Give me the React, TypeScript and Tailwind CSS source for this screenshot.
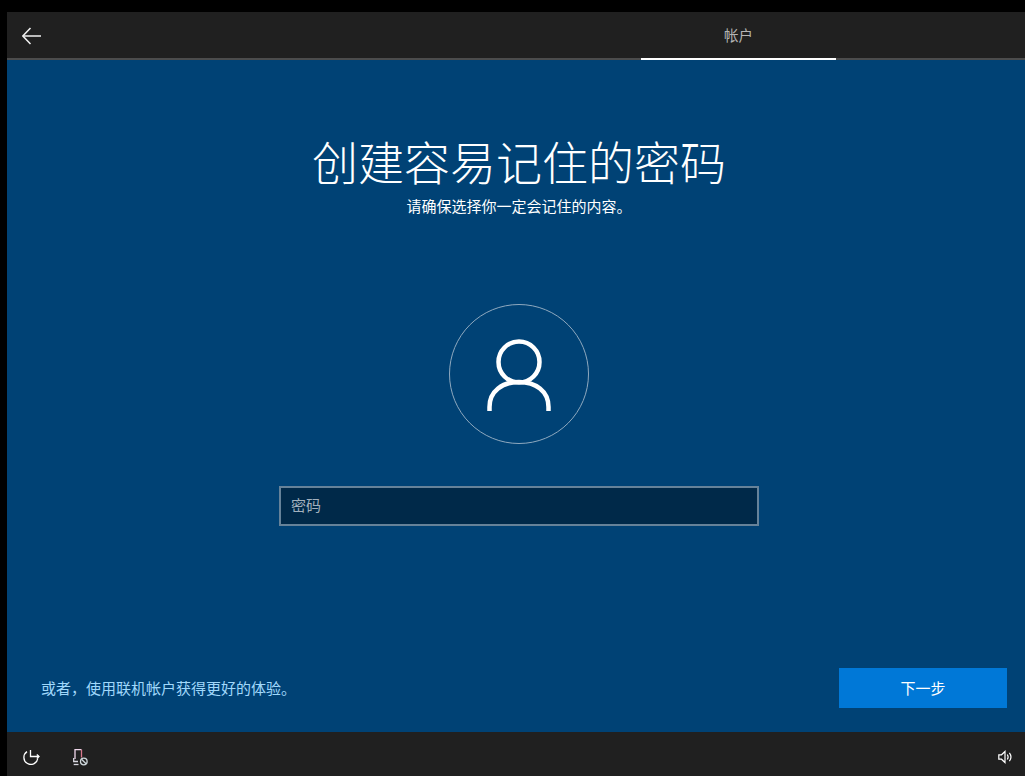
const cjk = "font-['Noto_Sans_CJK_SC','Noto_Sans',sans-serif]";

function BackIcon() {
  return (
    <svg width="19" height="18" viewBox="0 0 19 18" fill="none" stroke="#f0f0f0" strokeWidth="1.5">
      <path d="M8.5 1L0.9 9L8.5 17" />
      <path d="M1 9H19" />
    </svg>
  );
}

function EaseIcon() {
  return (
    <svg width="17" height="15" viewBox="0 0 17 15" fill="none" stroke="white" strokeWidth="1.3">
      <path d="M4 1.6A7 7 0 1 0 14.8 8.5" />
      <path d="M7.5 0V6.5H16" />
      <path d="M13.8 4.5L16 6.5L13.8 8.5" />
    </svg>
  );
}

function MicOffIcon() {
  return (
    <svg width="15" height="17" viewBox="0 0 15 17" fill="none" strokeWidth="1.3">
      <path d="M2 10V0.7H8.5" stroke="#f0d8ec" />
      <path d="M8.5 0.7V8.5" stroke="#d8788c" />
      <path d="M0.7 9V12.5H5" stroke="#d8d8e0" />
      <path d="M0.7 15.5H5.5" stroke="#d8d8e0" />
      <circle cx="10.8" cy="12.5" r="3.3" stroke="#cfd8dc" />
      <path d="M8.5 10.2L13.1 14.8" stroke="#cfd8dc" />
    </svg>
  );
}

function VolumeIcon() {
  return (
    <svg width="15" height="14" viewBox="0 0 15 14" fill="none" stroke="white" strokeWidth="1.2">
      <path d="M0.8 4.8H3.5L7 1.5V12.5L3.5 9.2H0.8Z" />
      <path d="M9.3 4.5C10.3 6 10.3 8 9.3 9.5" />
      <path d="M11.4 2.8C13.2 5.2 13.2 8.8 11.4 11.2" />
    </svg>
  );
}

function UserIcon() {
  return (
    <svg width="64" height="72" viewBox="0 0 64 72" fill="none" stroke="white" strokeWidth="4.5">
      <circle cx="32" cy="23" r="20.5" />
      <path d="M2.5 72V68C2.5 52 15.5 43 32 43C48.5 43 61.5 52 61.5 68V72" />
    </svg>
  );
}

export default function App() {
  return (
    <div className={`${cjk} flex h-[776px] w-[1025px] flex-col overflow-hidden bg-black pt-3 pl-[7px] text-white`}>
      {/* Top bar */}
      <header className="flex h-12 shrink-0 border-b-2 border-[#4c4c4c] bg-[#202020]">
        <div className="flex w-[634px] items-center pt-[2px] pl-[15px]">
          <BackIcon />
        </div>
        <div className="-mb-[2px] flex w-[195px] items-center justify-center border-b-2 border-white pb-[1px] text-[14.5px] text-[#b4b4b4]">
          帐户
        </div>
      </header>

      {/* Main */}
      <main className="flex flex-1 flex-col items-center bg-[#004275]">
        <div className="flex flex-col items-center pl-[6px]">
          <h1 className="mt-[69px] text-[46px] leading-[62px] font-light">创建容易记住的密码</h1>
          <p className="mt-[5px] text-[15px] leading-5">请确保选择你一定会记住的内容。</p>

          <div className="mt-[88px] flex h-[140px] w-[140px] items-center justify-center rounded-full border border-[#8fa9bf] pt-[1px]">
            <UserIcon />
          </div>

          <div className="mt-[42px] flex h-10 w-[480px] items-center border-2 border-[#668299] bg-[#002949] px-[10px] pb-[2px] text-[15px] text-[#a2b0bd]">
            密码
          </div>
        </div>

        <div className="mt-auto mb-6 flex w-full items-center justify-between pr-[18px] pl-[34px]">
          <span className="text-[15px] text-[#a0d8fb]">或者，使用联机帐户获得更好的体验。</span>
          <button className="h-10 w-[168px] bg-[#0078d7] text-[15px] text-white">下一步</button>
        </div>
      </main>

      {/* Bottom bar */}
      <footer className="flex h-11 shrink-0 items-center bg-[#202020] pr-[12px] pl-[16px]">
        <div className="mt-[7px]">
          <EaseIcon />
        </div>
        <div className="mt-[7px] ml-[33px]">
          <MicOffIcon />
        </div>
        <div className="mt-[6px] ml-auto">
          <VolumeIcon />
        </div>
      </footer>
    </div>
  );
}
